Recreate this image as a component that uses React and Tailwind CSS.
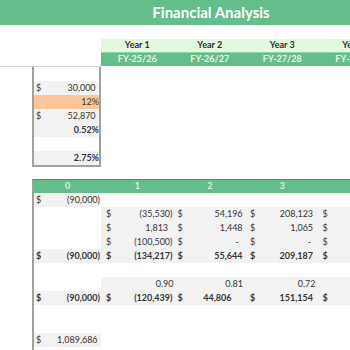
const years = ['Year 1', 'Year 2', 'Year 3', 'Year 4'];
const fys = ['FY-25/26', 'FY-26/27', 'FY-27/28', 'FY-28/29'];

function Money({ v, neg, className = '' }) {
  return (
    <div className={`flex justify-between items-end h-full pb-[1px] ${className}`}>
      <span>$</span>
      <span>
        {v}
        {!neg && v && <span className="invisible">)</span>}
      </span>
    </div>
  );
}

// one cell of the lower table: gray or white, with optional accounting value
function Cell({ w, gray, v, neg, money, plain, pl = 'pl-[4px]', pr = 'pr-[1px]' }) {
  return (
    <div className={`${w} h-full shrink-0 ${gray ? 'bg-[#f2f2f2]' : 'bg-white'}`}>
      {money && <Money v={v} neg={neg} className={`${pl} ${pr}`} />}
      {plain && (
        <div className={`flex justify-end items-end h-full pb-[1px] ${pr}`}>{plain}</div>
      )}
    </div>
  );
}

const C0 = 'w-[67px]';
const CN = 'w-[72.5px]';

export default function App() {
  return (
    <div className="w-[350px] h-[350px] overflow-hidden bg-white font-['Lato',sans-serif] text-[9px] text-[#363636]">
      {/* title */}
      <div className="h-[25px] w-[422px] bg-[#63be8b] flex items-center justify-center text-white font-bold text-[15px]">
        Financial Analysis
      </div>
      <div className="h-[14px]" />

      {/* year headers */}
      <div className="flex h-[13px]">
        <div className="w-[101px] shrink-0" />
        <div className="flex bg-[#e3f9dd]">
          {years.map((y) => (
            <div key={y} className={`${CN} shrink-0 flex items-end justify-center pb-[1px] font-bold text-[#2d2d2d]`}>
              {y}
            </div>
          ))}
        </div>
      </div>
      <div className="flex h-[14px]">
        <div className="w-[101px] shrink-0" />
        <div className="flex bg-[#63be8b] border-t border-[#8fd1a8]">
          {fys.map((f) => (
            <div key={f} className={`${CN} shrink-0 flex items-end justify-center pb-[1px] font-bold text-[#e6fae0]`}>
              {f}
            </div>
          ))}
        </div>
      </div>
      <div className="w-[101px] h-[1px] bg-[#d2d2d2]" />

      {/* input box */}
      <div className="ml-[32px] w-[69px] border-x-2 border-b-2 border-[#a0a0a0]">
        <div className="h-[14px]" />
        <div className="h-[14px] bg-[#f2f2f2]">
          <Money v="30,000" className="pl-[2px] pr-[1px]" />
        </div>
        <div className="h-[14px] bg-[#fdc698] flex justify-end items-end pb-[1px]">12%</div>
        <div className="h-[14px] bg-[#f2f2f2]">
          <Money v="52,870" className="pl-[2px] pr-[1px]" />
        </div>
        <div className="h-[14px] bg-[#f2f2f2] flex justify-end items-end pb-[1px] font-bold">0.52%</div>
        <div className="h-[14px]" />
        <div className="h-[14px] bg-[#f2f2f2] flex justify-end items-end pb-[1px] font-bold">2.75%</div>
      </div>
      <div className="h-[12px]" />

      {/* cash flow table */}
      <div className="ml-[32px] border-l-2 border-t border-[#7a7a7a] border-l-[#a0a0a0]">
        <div className="flex h-[13px] bg-[#63be8b] w-[400px]">
          {['0', '1', '2', '3', '4'].map((n, i) => (
            <div key={n} className={`${i === 0 ? C0 : CN} shrink-0 flex items-end justify-center pb-[1px] font-bold text-[#d8f3d6]`}>
              {n}
            </div>
          ))}
        </div>

        <div className="flex h-[14px]">
          <Cell w={C0} gray money v="(90,000)" neg pl="pl-[2px]" />
        </div>
        <div className="flex h-[14px]">
          <Cell w={C0} />
          <Cell w={CN} gray money v="(35,530)" neg pl="pl-[5px]" />
          <Cell w={CN} gray money v="54,196" />
          <Cell w={CN} gray money v="208,123" pr="pr-[3px]" />
          <Cell w={CN} gray money v="" />
        </div>
        <div className="flex h-[14px]">
          <Cell w={C0} />
          <Cell w={CN} gray money v="1,813" pl="pl-[5px]" pr="pr-[3px]" />
          <Cell w={CN} gray money v="1,448" />
          <Cell w={CN} gray money v="1,065" pr="pr-[3px]" />
          <Cell w={CN} gray money v="" />
        </div>
        <div className="flex h-[14px]">
          <Cell w={C0} />
          <Cell w={CN} gray money v="(100,500)" neg pl="pl-[5px]" />
          <Cell w={CN} gray money v="-" pr="pr-[5px]" />
          <Cell w={CN} gray money v="-" pr="pr-[5px]" />
          <Cell w={CN} gray money v="" />
        </div>
        <div className="flex h-[14px] font-bold">
          <Cell w={C0} gray money v="(90,000)" neg pl="pl-[2px]" />
          <Cell w={CN} gray money v="(134,217)" neg pl="pl-[5px]" />
          <Cell w={CN} gray money v="55,644" />
          <Cell w={CN} gray money v="209,187" pr="pr-[3px]" />
          <Cell w={CN} gray money v="" />
        </div>
        <div className="h-[14px]" />
        <div className="flex h-[14px]">
          <Cell w={C0} />
          <Cell w={CN} gray plain="0.90" pr="pr-0" />
          <Cell w={CN} gray plain="0.81" pr="pr-[3px]" />
          <Cell w={CN} gray plain="0.72" pr="pr-[3px]" />
          <Cell w={CN} gray />
        </div>
        <div className="flex h-[14px] font-bold">
          <Cell w={C0} gray money v="(90,000)" neg pl="pl-[2px]" />
          <Cell w={CN} gray money v="(120,439)" neg pl="pl-[5px]" />
          <Cell w={CN} gray money v="44,806" pr="pr-[12px]" />
          <Cell w={CN} gray money v="151,154" pr="pr-[3px]" />
          <Cell w={CN} gray money v="" />
        </div>
        <div className="h-[28px]" />
        <div className="flex h-[14px]">
          <Cell w={C0} gray money v="1,089,686" pl="pl-[2px]" />
        </div>
        <div className="h-[14px]" />
      </div>
    </div>
  );
}
